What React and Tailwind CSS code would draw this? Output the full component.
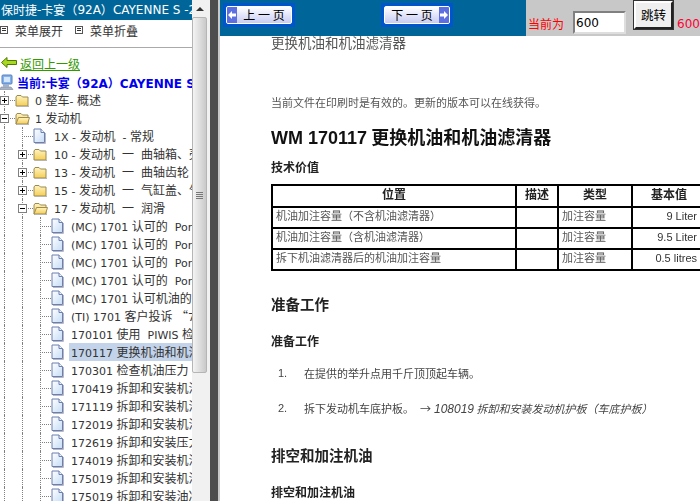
import React from "react";

// latin runs are smaller than the cjk runs in the tree
function Mixed({ text, latin = "text-[11px]" }) {
  return text.split(/([\u0000-\u00ff\u2013]+)/).filter(Boolean).map((part, i) =>
    /^[\u0000-\u00ff\u2013]+$/.test(part) ? (
      <span key={i} className={`${latin} font-['DejaVu_Sans',sans-serif]`}>{part}</span>
    ) : (
      <span key={i} className="text-[12px] font-['Noto_Sans_CJK_SC',sans-serif]">{part}</span>
    )
  );
}

function Folder({ open }) {
  return (
    <svg width="15" height="13" viewBox="0 0 15 13" className="block">
      <defs>
        <linearGradient id="folderFill" x1="0" y1="0" x2="0" y2="1">
          <stop offset="0" stopColor="#fff4c0" />
          <stop offset="1" stopColor="#f6cd55" />
        </linearGradient>
      </defs>
      <path d="M1 3 L2 1.5 H6 L7.5 3 H13 V12 H1 Z" fill="url(#folderFill)" stroke="#9a8a50" strokeWidth="1" />
      {open && <path d="M1 12 L3.5 5.5 H14.5 L12.5 12 Z" fill="url(#folderFill)" stroke="#a08c50" strokeWidth="1" />}
      <path d="M2 12.5 H14" stroke="#b5b5b5" strokeWidth="1" />
    </svg>
  );
}

function Doc() {
  return (
    <svg width="13" height="16" viewBox="0 0 13 16" className="block">
      <defs>
        <linearGradient id="docFill" x1="0" y1="0" x2="1" y2="1">
          <stop offset="0" stopColor="#ffffff" />
          <stop offset="1" stopColor="#c4dcf6" />
        </linearGradient>
      </defs>
      <path d="M1 1 H8 L11.5 4.5 V14.5 H1 Z" fill="url(#docFill)" stroke="#6b7fb0" strokeWidth="1" />
      <path d="M8 1 V4.5 H11.5" fill="#eef4fc" stroke="#6b7fb0" strokeWidth="1" />
      <path d="M2 15.5 H12.5 V5" fill="none" stroke="#b8b8c4" strokeWidth="1" />
    </svg>
  );
}

function Toggle({ open }) {
  return (
    <div className="absolute left-0 top-[5px] flex h-[9px] w-[9px] items-center justify-center border border-[#808080] bg-white">
      <div className="relative h-[1px] w-[5px] bg-black">
        {!open && <div className="absolute left-[2px] top-[-2px] h-[5px] w-[1px] bg-black" />}
      </div>
    </div>
  );
}

function Row({ level, kind, toggle, text, selected }) {
  return (
    <div className="flex h-[18px] items-center whitespace-pre text-[#333]">
      {Array.from({ length: level }).map((_, i) => (
        <div key={i} className="h-full w-[18px] shrink-0 pl-[4px]">
          <div className="h-full border-l border-dotted border-[#808080]" />
        </div>
      ))}
      <div className="relative h-full w-[15px] shrink-0">
        <div className="absolute bottom-0 left-[4px] top-0 border-l border-dotted border-[#808080]" />
        <div className="absolute left-[4px] right-0 top-[9px] border-t border-dotted border-[#808080]" />
        {toggle && <Toggle open={toggle === "open"} />}
      </div>
      <div className="w-[18px] shrink-0">
        {kind === "doc" ? <Doc /> : <Folder open={kind === "open"} />}
      </div>
      <div className={`flex h-full min-w-0 flex-1 items-center overflow-hidden pb-[2px] ${level === 1 ? "pl-[3px]" : "pl-[2px]"} ${selected ? "bg-[#c3d3ea]" : ""}`}>
        <span><Mixed text={text} /></span>
      </div>
    </div>
  );
}

const tree = [
  { level: 0, kind: "folder", toggle: "closed", text: "0 整车- 概述" },
  { level: 0, kind: "open", toggle: "open", text: "1 发动机" },
  { level: 1, kind: "doc", text: "1X - 发动机  - 常规" },
  { level: 1, kind: "folder", toggle: "closed", text: "10 - 发动机  一  曲轴箱、壳体" },
  { level: 1, kind: "folder", toggle: "closed", text: "13 - 发动机  一  曲轴齿轮" },
  { level: 1, kind: "folder", toggle: "closed", text: "15 - 发动机  一  气缸盖、气门" },
  { level: 1, kind: "open", toggle: "open", text: "17 - 发动机  一  润滑" },
  { level: 2, kind: "doc", text: "(MC) 1701 认可的  Porsche" },
  { level: 2, kind: "doc", text: "(MC) 1701 认可的  Porsche" },
  { level: 2, kind: "doc", text: "(MC) 1701 认可的  Porsche" },
  { level: 2, kind: "doc", text: "(MC) 1701 认可的  Porsche" },
  { level: 2, kind: "doc", text: "(MC) 1701 认可机油的规格" },
  { level: 2, kind: "doc", text: "(TI) 1701 客户投诉 “716" },
  { level: 2, kind: "doc", text: "170101 使用  PIWIS 检测仪" },
  { level: 2, kind: "doc", text: "170117 更换机油和机油滤清器", selected: true },
  { level: 2, kind: "doc", text: "170301 检查机油压力" },
  { level: 2, kind: "doc", text: "170419 拆卸和安装机油滤清器" },
  { level: 2, kind: "doc", text: "171119 拆卸和安装机油泵" },
  { level: 2, kind: "doc", text: "172019 拆卸和安装机油尺" },
  { level: 2, kind: "doc", text: "172619 拆卸和安装压力开关" },
  { level: 2, kind: "doc", text: "174019 拆卸和安装机油管" },
  { level: 2, kind: "doc", text: "175019 拆卸和安装机油冷却器" },
  { level: 2, kind: "doc", text: "175019 拆卸和安装油冷却器" },
];

function ListIcon() {
  return (
    <div className="flex h-[8px] w-[8px] flex-col justify-center gap-[1px] border border-[#555] bg-white px-[1px]">
      <div className="h-[1px] bg-[#333]" />
      <div className="h-[1px] bg-[#333]" />
    </div>
  );
}

function Sidebar() {
  return (
    <div className="flex h-full w-[192px] shrink-0 flex-col overflow-hidden bg-white">
      <div className="flex h-[20px] shrink-0 items-center whitespace-pre bg-[#006699] pl-[1px] text-white">
        <Mixed text="保时捷-卡宴（92A）CAYENNE S -2011" latin="text-[12px]" />
      </div>
      <div className="flex h-[28px] shrink-0 items-center border-b border-[#aaa] pb-[8px] text-[#333]">
        <ListIcon />
        <span className="ml-[7px]"><Mixed text="菜单展开" /></span>
        <div className="ml-[12px]"><ListIcon /></div>
        <span className="ml-[7px]"><Mixed text="菜单折叠" /></span>
      </div>
      <div className="flex h-[25px] shrink-0 items-center pl-[1px] pt-[4px]">
        <svg width="16" height="11" viewBox="0 0 16 11" className="block">
          <path d="M0.5 5.5 L6 0.5 V3.5 H15.5 V7.5 H6 V10.5 Z" fill="#a8d820" stroke="#4d7a00" strokeWidth="1" />
        </svg>
        <span className="ml-[3px] text-[#339900] underline"><Mixed text="返回上一级" /></span>
      </div>
      <div className="flex h-[18px] shrink-0 items-center whitespace-pre">
        <svg width="14" height="17" viewBox="0 0 14 17" className="block shrink-0">
          <rect x="2" y="1" width="10" height="9" rx="1" fill="#7fb2ee" stroke="#5b7fb8" />
          <rect x="4" y="3" width="6" height="5" fill="#d4e6fb" />
          <path d="M1 13 H11 L13 15.5 H0 Z" fill="#a9b4c6" stroke="#7d8797" strokeWidth="0.6" />
          <rect x="3" y="10" width="6" height="3" fill="#9fb1cc" />
        </svg>
        <span className="ml-[3px] font-bold text-[#0000ee]"><Mixed text="当前:卡宴（92A）CAYENNE S -2011" latin="text-[12px]" /></span>
      </div>
      <div className="min-h-0 flex-1 overflow-hidden">
        {tree.map((r, i) => <Row key={i} {...r} />)}
      </div>
    </div>
  );
}

function Scrollbar() {
  return (
    <div className="flex h-full w-[18px] shrink-0 flex-col bg-[#f1f1f1]">
      <div className="flex h-[17px] shrink-0 items-center justify-center pr-[3px]">
        <div className="h-0 w-0 border-x-[4px] border-b-[4px] border-x-transparent border-b-[#333]" />
      </div>
      <div className="flex h-[356px] w-[15px] shrink-0 flex-col items-center justify-center gap-[1px] rounded-[2px] border border-[#b5b5b5] bg-gradient-to-r from-[#f4f4f4] to-[#c9c9c9]">
        <div className="h-[1px] w-[7px] bg-[#777]" />
        <div className="h-[1px] w-[7px] bg-[#777]" />
        <div className="h-[1px] w-[7px] bg-[#777]" />
        <div className="h-[1px] w-[7px] bg-[#777]" />
      </div>
    </div>
  );
}

function PageButton({ label, dir, className }) {
  const arrow = (
    <div className="flex h-full w-[10px] items-center justify-center bg-[#5c6ee0] text-[9px] leading-none text-white">
      <svg width="8" height="8" viewBox="0 0 8 8">
        <path d={dir === "prev" ? "M0 4 L4 0 V2.5 H8 V5.5 H4 V8 Z" : "M8 4 L4 0 V2.5 H0 V5.5 H4 V8 Z"} fill="#fff" />
      </svg>
    </div>
  );
  return (
    <div className={`h-[24px] w-[72px] bg-[#0055cc] p-[3px] ${className}`}>
      <div className="flex h-full items-center overflow-hidden rounded-[2px] border border-white bg-gradient-to-b from-white to-[#c8ccf2]">
        {dir === "prev" && arrow}
        <span className="flex-1 whitespace-pre text-center font-['Noto_Sans_CJK_SC',sans-serif] text-[12px] leading-none text-black">{label}</span>
        {dir === "next" && arrow}
      </div>
    </div>
  );
}

function TopBar() {
  return (
    <div className="flex h-[36px] shrink-0">
      <div className="flex w-[306px] shrink-0 items-start bg-[#006699] pl-[3px] pt-[3px]">
        <PageButton label="上 一 页" dir="prev" />
        <PageButton label="下 一 页" dir="next" className="ml-[86px]" />
      </div>
      <div className="flex flex-1 items-start bg-[#c8c8c8] pl-[2px]">
        <span className="mt-[18px] font-['Noto_Sans_CJK_SC',sans-serif] text-[12px] leading-none text-[#ff0000]">当前为</span>
        <input
          readOnly
          value="600"
          className="ml-[9px] mt-[11px] h-[23px] w-[53px] border-2 border-b-[#dedede] border-l-[#808080] border-r-[#dedede] border-t-[#808080] bg-white px-[1px] font-['DejaVu_Sans',sans-serif] text-[12px] text-black outline-none"
        />
        <button className="ml-[8px] mt-[1px] h-[28px] w-[39px] border-2 border-b-[#222] border-l-white border-r-[#222] border-t-white bg-[#efefef] font-['Noto_Sans_CJK_SC',sans-serif] text-[12.5px] text-black outline outline-1 outline-[#333]">
          跳转
        </button>
        <span className="ml-[4px] mt-[18px] font-['DejaVu_Sans',sans-serif] text-[12px] leading-none text-[#ff0033]">600</span>
      </div>
    </div>
  );
}

const specs = [
  ["机油加注容量（不含机油滤清器）", "加注容量", "9 Liter"],
  ["机油加注容量（含机油滤清器）", "加注容量", "9.5 Liter"],
  ["拆下机油滤清器后的机油加注容量", "加注容量", "0.5 litres"],
];

function SpecTable() {
  return (
    <table className="mt-[9px] w-[434px] table-fixed border-collapse border-2 border-black text-[11px] leading-[14px] text-[#555]">
      <colgroup>
        <col className="w-[244px]" />
        <col className="w-[42px]" />
        <col className="w-[74px]" />
        <col className="w-[74px]" />
      </colgroup>
      <thead>
        <tr className="h-[22px] text-[12px] font-bold text-[#222]">
          <th className="border-2 border-black p-0 pb-[5px]">位置</th>
          <th className="border-2 border-black p-0 pb-[5px]">描述</th>
          <th className="border-2 border-black p-0 pb-[5px]">类型</th>
          <th className="border-2 border-black p-0 pb-[5px]">基本值</th>
        </tr>
      </thead>
      <tbody>
        {specs.map((r) => (
          <tr key={r[0]} className="h-[21px]">
            <td className="border-2 border-black px-[3px] pb-[5px] pt-0">{r[0]}</td>
            <td className="border-2 border-black p-0" />
            <td className="border-2 border-black px-[3px] pb-[5px] pt-0">{r[1]}</td>
            <td className="whitespace-nowrap border-2 border-black pb-[3px] pl-[2px] pr-[8px] pt-0 text-right font-['Liberation_Sans',sans-serif] text-[#333]">{r[2]}</td>
          </tr>
        ))}
      </tbody>
    </table>
  );
}

function Document() {
  return (
    <div className="min-h-0 flex-1 overflow-hidden bg-white pl-[51px] font-['Noto_Sans_CJK_SC',sans-serif] text-[#333] blur-[0.4px]">
      <p className="mt-[-2px] text-[13.5px] leading-[16px] text-[#555]">更换机油和机油滤清器</p>
      <p className="mt-[44px] text-[11px] leading-[16px] text-[#555]">当前文件在印刷时是有效的。更新的版本可以在线获得。</p>
      <h1 className="mt-[14px] whitespace-nowrap text-[18px] font-bold leading-[24px] text-[#111]">
        <span className="font-['Liberation_Sans',sans-serif]">WM 170117</span> 更换机油和机油滤清器
      </h1>
      <h3 className="mt-[9px] text-[12px] font-bold leading-[16px] text-[#222]">技术价值</h3>
      <SpecTable />
      <h2 className="mt-[23px] text-[14.5px] font-bold leading-[20px] text-[#222]">准备工作</h2>
      <h3 className="mt-[19px] text-[12px] font-bold leading-[16px] text-[#222]">准备工作</h3>
      <div className="mt-[16px] flex text-[11px] leading-[16px] text-[#444]">
        <span className="w-[33px] pl-[7px] font-['Liberation_Sans',sans-serif]">1.</span>
        <span>在提供的举升点用千斤顶顶起车辆。</span>
      </div>
      <div className="mt-[19px] flex text-[11px] leading-[16px] text-[#444]">
        <span className="w-[33px] pl-[7px] font-['Liberation_Sans',sans-serif]">2.</span>
        <span>
          拆下发动机车底护板。
          <span className="ml-[6px]">→</span>
          <i className="ml-[3px]"><span className="font-['Liberation_Sans',sans-serif] text-[12px]">108019</span> 拆卸和安装发动机护板（车底护板）</i>
        </span>
      </div>
      <h2 className="mt-[28px] text-[14.5px] font-bold leading-[20px] text-[#222]">排空和加注机油</h2>
      <h3 className="mt-[19px] text-[12px] font-bold leading-[16px] text-[#222]">排空和加注机油</h3>
    </div>
  );
}

export default function App() {
  return (
    <div className="flex h-[501px] w-[700px] overflow-hidden bg-white">
      <Sidebar />
      <Scrollbar />
      <div className="h-full w-[10px] shrink-0 border-r-2 border-[#c8c8c8] bg-[#4d4d4d]" />
      <div className="flex h-full min-w-0 flex-1 flex-col">
        <TopBar />
        <Document />
      </div>
    </div>
  );
}
